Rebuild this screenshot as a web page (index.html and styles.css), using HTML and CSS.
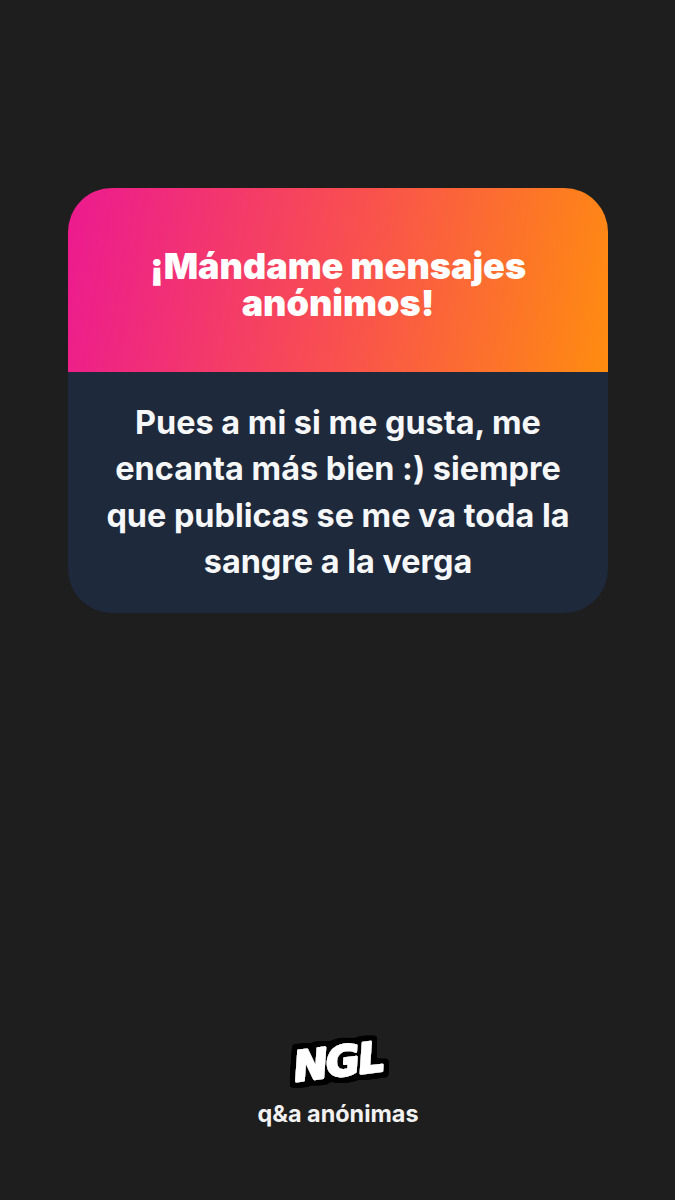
FILE: index.html
```html
<!DOCTYPE html>
<html lang="es">
<head>
    <meta charset="UTF-8">
    <meta name="viewport" content="width=device-width, initial-scale=1.0">
    <title>NGL</title>
    <link rel="stylesheet" href="styles.css">
</head>
<body>
    <main class="page">
        <section class="card">
            <header class="card-head">
                <h1 class="card-title">¡Mándame mensajes anónimos!</h1>
            </header>
            <div class="card-body">
                <p class="card-text">Pues a mi si me gusta, me encanta más bien :) siempre que publicas se me va toda la sangre a la verga</p>
            </div>
        </section>
        <footer class="brand">
            <svg class="logo" width="110" height="66" viewBox="0 0 110 66">
                <defs>
                    <filter id="outline" x="-20%" y="-30%" width="140%" height="160%">
                        <feMorphology in="SourceAlpha" operator="dilate" radius="5" result="fat"/>
                        <feGaussianBlur in="fat" stdDeviation="1.5" result="soft"/>
                        <feComponentTransfer in="soft" result="edge">
                            <feFuncA type="linear" slope="6" intercept="-2"/>
                        </feComponentTransfer>
                        <feMerge>
                            <feMergeNode in="edge"/>
                            <feMergeNode in="SourceGraphic"/>
                        </feMerge>
                    </filter>
                </defs>
                <g filter="url(#outline)">
                    <text class="logo-text" x="11" y="42" transform="rotate(-7 55 33)">NGL</text>
                </g>
            </svg>
            <div class="tagline">q&amp;a anónimas</div>
        </footer>
    </main>
</body>
</html>
```

FILE: styles.css
```css
* {
    box-sizing: border-box;
}
html, body {
    margin: 0;
    height: 100%;
}
body {
    background-color: #1e1e1e;
    font-family: Inter, "Liberation Sans", sans-serif;
    color: #fff;
}
.page {
    height: 1200px;
    padding: 188px 67px 73px 68px;
    display: flex;
    flex-direction: column;
    justify-content: space-between;
}
.card {
    border-radius: 44px;
    overflow: hidden;
}
.card-head {
    height: 184px;
    display: flex;
    align-items: center;
    justify-content: center;
    padding: 10px 50px 0;
    background: linear-gradient(100deg, #ec1a90 0%, #f9504f 52%, #ff8c10 100%);
}
.card-title {
    margin: 0;
    font-size: 36px;
    font-weight: 900;
    line-height: 37px;
    text-align: center;
}
.card-body {
    height: 241px;
    padding: 28px 30px 0;
    background-color: #1e293b;
}
.card-text {
    margin: 0;
    font-size: 32.4px;
    font-weight: 700;
    line-height: 46.4px;
    text-align: center;
    color: #f6f7f9;
}
.brand {
    display: flex;
    flex-direction: column;
    align-items: center;
    gap: 0;
}
.logo {
    display: block;
}
.logo-text {
    font-family: "DejaVu Sans", sans-serif;
    font-size: 41px;
    font-weight: 700;
    font-style: italic;
    letter-spacing: -1.5px;
    fill: #fff;
    stroke: #fff;
    stroke-width: 2.5px;
    stroke-linejoin: round;
}
.tagline {
    font-size: 23.4px;
    font-weight: 700;
    line-height: 27px;
    color: #f2f2f2;
}
```
